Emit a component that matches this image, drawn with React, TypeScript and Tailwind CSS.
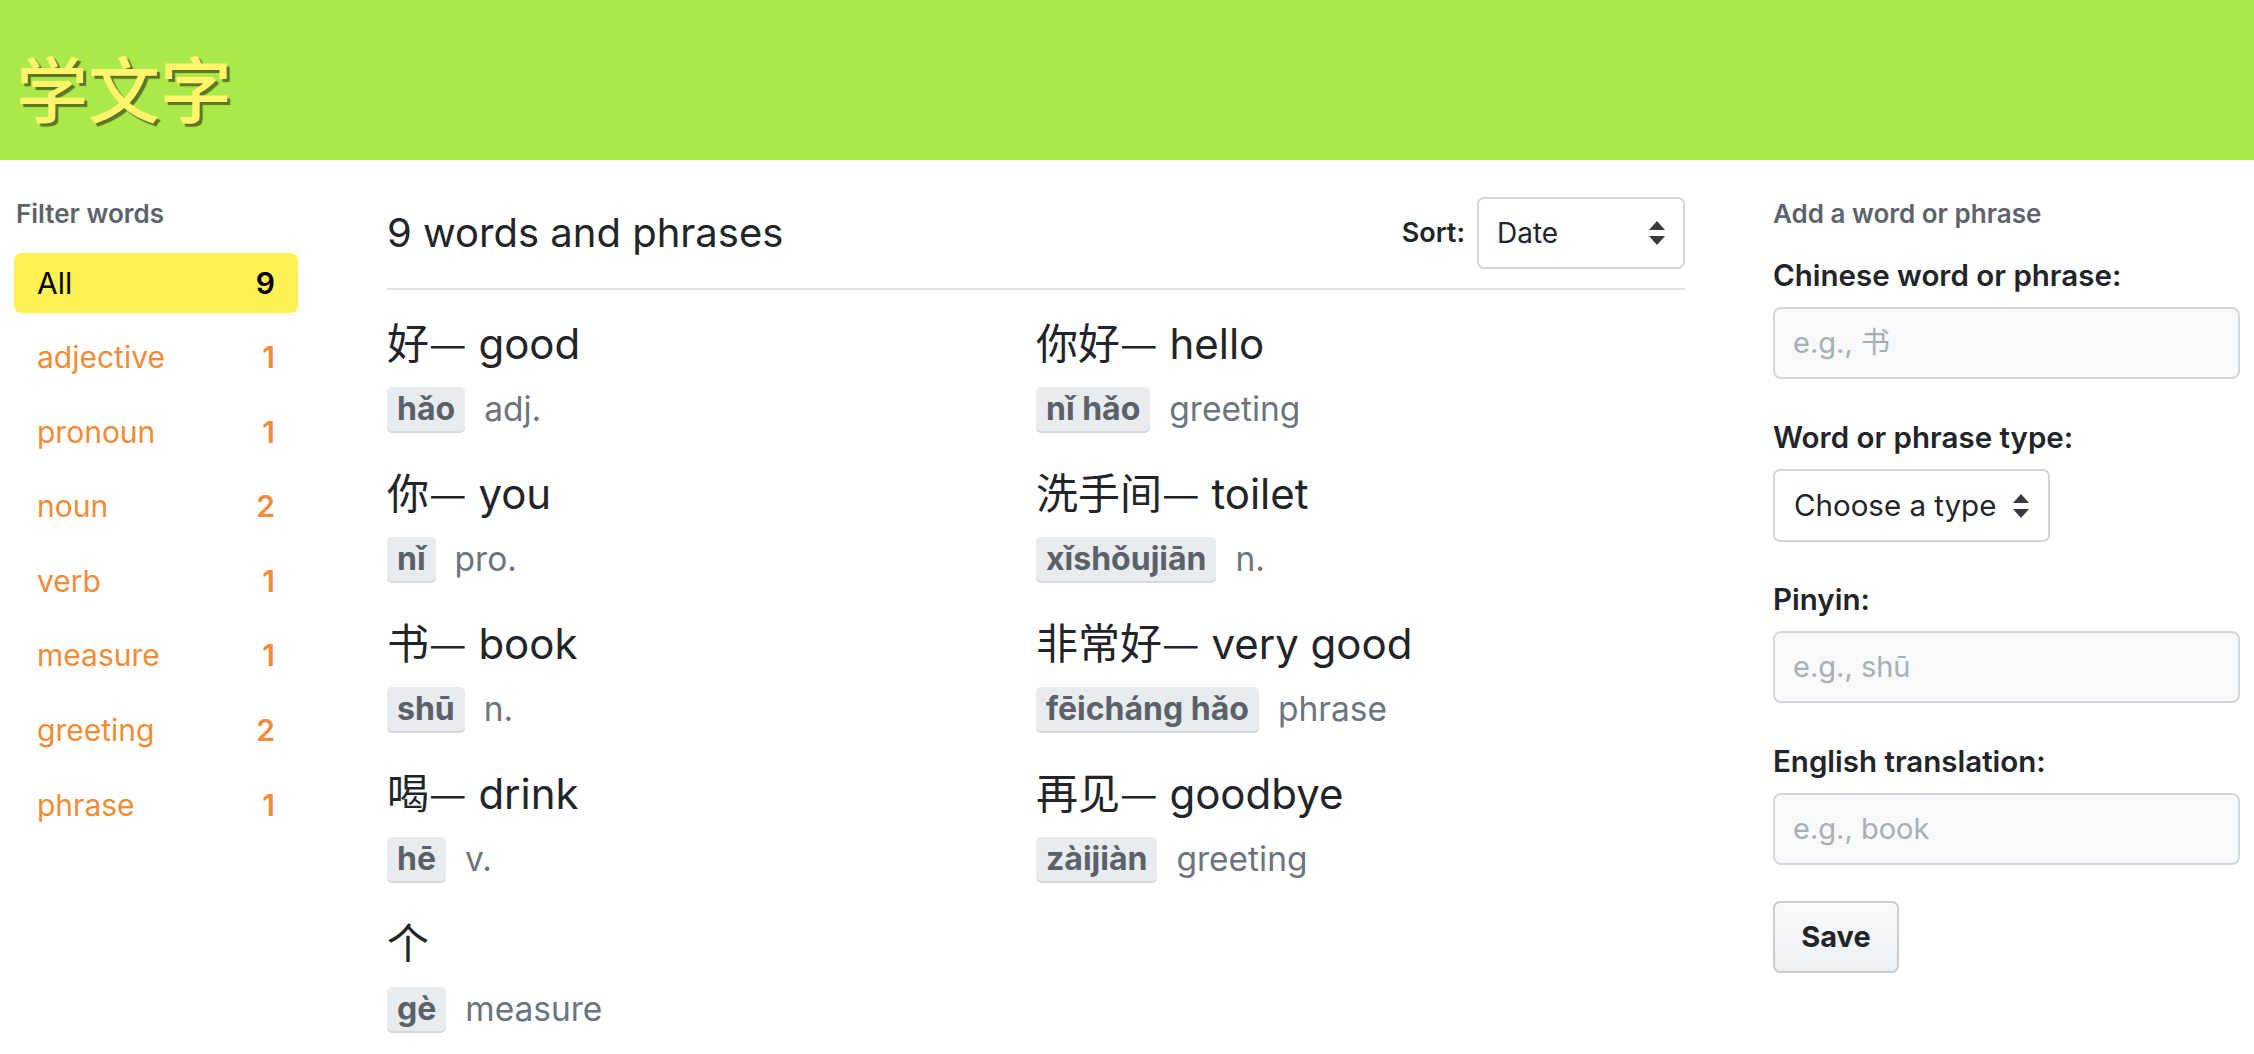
import React from "react";

const words = [
  { zh: "好", en: "good", py: "hǎo", type: "adj." },
  { zh: "你好", en: "hello", py: "nǐ hǎo", type: "greeting" },
  { zh: "你", en: "you", py: "nǐ", type: "pro." },
  { zh: "洗手间", en: "toilet", py: "xǐshǒujiān", type: "n." },
  { zh: "书", en: "book", py: "shū", type: "n." },
  { zh: "非常好", en: "very good", py: "fēicháng hǎo", type: "phrase" },
  { zh: "喝", en: "drink", py: "hē", type: "v." },
  { zh: "再见", en: "goodbye", py: "zàijiàn", type: "greeting" },
  { zh: "个", en: "", py: "gè", type: "measure" },
];

const filters = [
  { name: "adjective", count: 1 },
  { name: "pronoun", count: 1 },
  { name: "noun", count: 2 },
  { name: "verb", count: 1 },
  { name: "measure", count: 1 },
  { name: "greeting", count: 2 },
  { name: "phrase", count: 1 },
];

function Arrows() {
  return (
    <svg width="18" height="28" viewBox="0 0 18 28" className="shrink-0">
      <path d="M9 2 L17 11 L1 11 Z" fill="#343a40" />
      <path d="M9 26 L17 17 L1 17 Z" fill="#343a40" />
    </svg>
  );
}

function Label({ children }: { children: React.ReactNode }) {
  return <div className="h-[36px] leading-[36px] text-[29.5px] font-semibold text-[#212529]">{children}</div>;
}

function TextInput({ placeholder }: { placeholder: string }) {
  return (
    <div className="mt-[14px] h-[72px] w-[467px] rounded-[8px] border-2 border-[#d3d7dc] bg-[#f8f9fa] flex items-center pl-[18px] text-[29px] text-[#a9aeb4]">
      {placeholder}
    </div>
  );
}

export default function App() {
  return (
    <main className="min-h-screen bg-white font-['Inter','Noto_Sans_CJK_SC',sans-serif] text-[#212529]">
      <header className="h-[160px] bg-[#abe94b] flex items-center pl-[16px]">
        <h1 className="font-['Noto_Sans_CJK_SC',sans-serif] text-[72px] font-medium leading-none text-[#fff46b] [text-shadow:3px_3px_1px_rgba(70,90,25,0.8)] mt-[12px]">
          学文字
        </h1>
      </header>

      <div className="flex pt-[37px]">
        {/* sidebar */}
        <aside className="w-[284px] ml-[14px] pt-[2px]">
          <div className="h-[30px] leading-[30px] pl-[2px] text-[26px] font-semibold text-[#5c636a]">Filter words</div>
          <div className="mt-[24px] flex flex-col gap-[14.6px]">
            <div className="h-[60px] rounded-[7px] bg-[#fff155] flex items-center justify-between px-[23px] text-[30px] text-black">
              <span>All</span>
              <span className="font-semibold">9</span>
            </div>
            {filters.map((f) => (
              <div key={f.name} className="h-[60px] flex items-center justify-between px-[23px] text-[30px] text-[#f08c36]">
                <span>{f.name}</span>
                <span className="font-semibold">{f.count}</span>
              </div>
            ))}
          </div>
        </aside>

        {/* word list */}
        <section className="ml-[89px] w-[1298px]">
          <div className="h-[72px] flex items-center justify-between">
            <h2 className="text-[40px] text-[#212529]">9 words and phrases</h2>
            <div className="flex items-center gap-[12px]">
              <span className="text-[27px] font-semibold">Sort:</span>
              <div className="h-[72px] w-[208px] rounded-[7px] border-2 border-[#d3d7dc] bg-white flex items-center justify-between pl-[18px] pr-[17px] text-[28px]">
                <span>Date</span>
                <Arrows />
              </div>
            </div>
          </div>
          <div className="mt-[19px] border-t-2 border-[#dee2e6]" />
          <div className="mt-[26px] grid grid-cols-2">
            {words.map((w) => (
              <div key={w.zh} className="h-[150px]">
                <div className="h-[50px] leading-[50px] text-[42px] whitespace-nowrap">
                  <span className="font-['Noto_Sans_CJK_SC',sans-serif]">
                    {w.zh}
                    {w.en ? "—" : ""}
                  </span>
                  {w.en ? <span> {w.en}</span> : null}
                </div>
                <div className="mt-[21px] h-[44px] flex items-center gap-[19px]">
                  <span className="h-[44px] px-[10px] rounded-[5px] bg-[#e9ecef] shadow-[0_2px_0_#d6d9dc] flex items-center text-[32px] font-bold text-[#5a6169]">
                    {w.py}
                  </span>
                  <span className="text-[33.5px] text-[#6c757d]">{w.type}</span>
                </div>
              </div>
            ))}
          </div>
        </section>

        {/* add form */}
        <aside className="ml-[88px] w-[467px] pt-[2px]">
          <div className="h-[30px] leading-[30px] text-[26px] font-semibold text-[#5c636a]">Add a word or phrase</div>
          <div className="mt-[28px]">
            <Label>Chinese word or phrase:</Label>
            <TextInput placeholder="e.g., 书" />
          </div>
          <div className="mt-[40px]">
            <Label>Word or phrase type:</Label>
            <div className="mt-[14px] h-[73px] w-[277px] rounded-[7px] border-2 border-[#d3d7dc] bg-white flex items-center justify-between pl-[19px] pr-[18px] text-[29.5px]">
              <span>Choose a type</span>
              <Arrows />
            </div>
          </div>
          <div className="mt-[39px]">
            <Label>Pinyin:</Label>
            <TextInput placeholder="e.g., shū" />
          </div>
          <div className="mt-[40px]">
            <Label>English translation:</Label>
            <TextInput placeholder="e.g., book" />
          </div>
          <button className="mt-[36px] h-[72px] w-[126px] rounded-[7px] border-2 border-[#c9cdd2] bg-gradient-to-b from-[#f8f9fa] to-[#edf0f3] text-[29px] font-bold text-[#212529]">
            Save
          </button>
        </aside>
      </div>
    </main>
  );
}
